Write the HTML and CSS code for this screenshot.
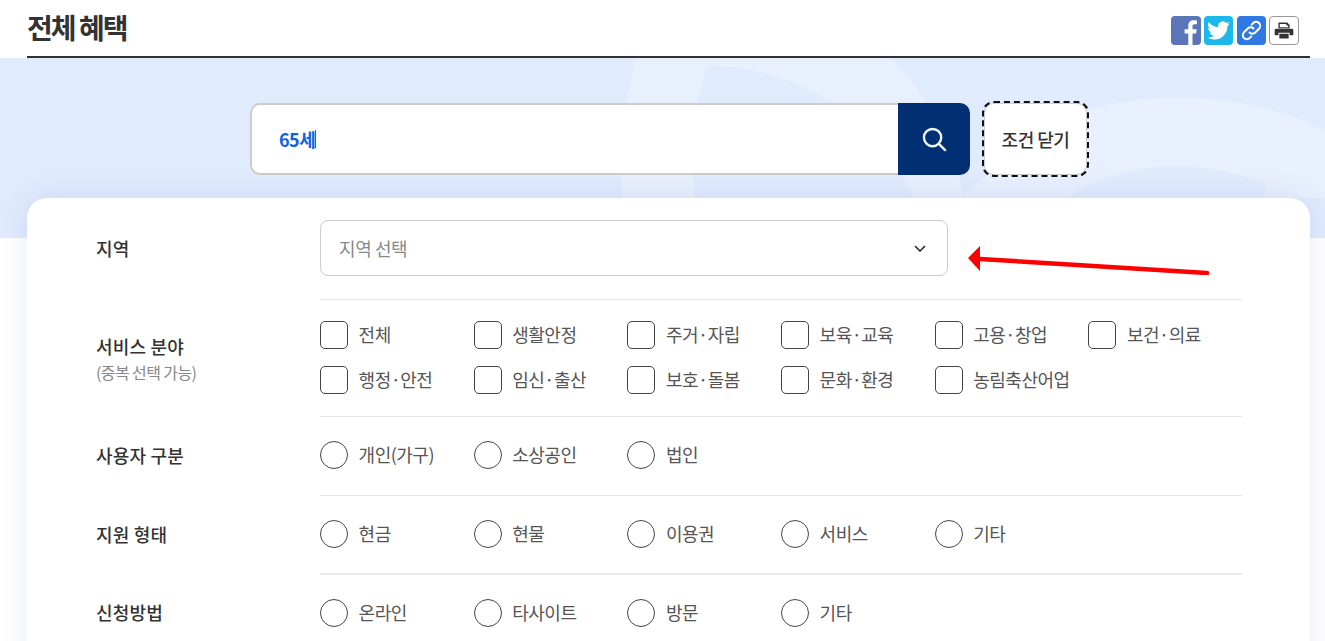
FILE: index.html
```html
<html>

<head>
    <meta charset="UTF-8">
    <meta name="viewport" content="width=device-width, initial-scale=1.0">
    <title>전체 혜택</title>

    <link rel="stylesheet" href="styles.css">
</head>

<body>
    <header class="page-head">
        <h2 class="page-title">전체 혜택</h2>
        <div class="share">
            <a class="share-btn share-fb" href="#" aria-label="페이스북">
                <svg viewBox="0 0 30 29"><path d="M21.5 29V17.6h3.6l.6-4.4h-4.2v-2.8c0-1.3.4-2.1 2.2-2.1h2.2V4.4c-.4-.1-1.700-.2-3.200-.2-3.200 0-5.400 2-5.400 5.600v3.400h-3.700v4.400h3.700V29z" fill="#fff"/></svg>
            </a>
            <a class="share-btn share-tw" href="#" aria-label="트위터">
                <svg viewBox="-3.500 -3.500 31 31"><path d="M23.950 4.570a10 10 0 01-2.830.8 4.900 4.900 0 002.170-2.720 9.900 9.900 0 01-3.130 1.190 4.920 4.920 0 00-8.380 4.480A14 14 0 011.640 3.160a4.930 4.930 0 001.520 6.570 4.900 4.900 0 01-2.230-.62v.06a4.920 4.920 0 003.950 4.830 4.900 4.900 0 01-2.220.08 4.930 4.930 0 004.600 3.420A9.870 9.870 0 010 19.540a13.940 13.940 0 007.550 2.210c9.060 0 14-7.500 14-14v-.64a10 10 0 002.460-2.550z" fill="#fff"/></svg>
            </a>
            <a class="share-btn share-link" href="#" aria-label="링크 복사">
                <svg viewBox="0 0 29 29" fill="none" stroke="#fff" stroke-width="2" stroke-linecap="round">
                    <path d="M12.500 16.500a4 4 0 005.700 0l3.800-3.800a4 4 0 00-5.700-5.700l-1.600 1.600"/>
                    <path d="M16.500 12.500a4 4 0 00-5.700 0L7 16.300a4 4 0 005.700 5.700l1.600-1.600"/>
                </svg>
            </a>
            <a class="share-btn share-print" href="#" aria-label="인쇄">
                <svg viewBox="0 0 30 29"><path d="M9 6h9.500L21 8.500V12H9zm1.500 1.500V11h9V9h-2V7.500zM6.500 12.500h17a1.500 1.500 0 011.500 1.500v5.500h-4V17H9v2.500H5V14a1.500 1.500 0 011.500-1.500zM10 18h10v5H10z" fill="#333"/></svg>
            </a>
        </div>
    </header>

    <section class="hero">
        <svg class="hero-bg" viewBox="0 0 1325 180">
            <path d="M637 0H890C920 25 950 80 965 140H915C890 95 860 60 835 45C800 25 760 8 708 8C692 50 690 90 695 140H622C618 90 625 40 637 0z" fill="#e8f0fe"/>
            <path d="M960 140C985 120 1040 70 1089 52C1140 35 1240 30 1325 72V140H1265V126C1220 105 1130 95 1067 140z" fill="#e8f0fe"/>
        </svg>
        <form class="search" onsubmit="return false">
            <div class="search-box">
                <div class="search-field"><span class="search-value">65세</span><span class="caret"></span></div>
                <button type="button" class="search-btn" aria-label="검색">
                    <svg viewBox="0 0 26 26" fill="none" stroke="#f2f5fa" stroke-width="2.500" stroke-linecap="round">
                        <circle cx="11" cy="11" r="9"/>
                        <path d="M17.500 17.500L24 24"/>
                    </svg>
                </button>
            </div>
            <button type="button" class="toggle-btn">조건 닫기</button>
        </form>
    </section>

    <main class="card">
        <div class="row row-select">
            <div class="row-label">지역</div>
            <div class="select">
                <span>지역 선택</span>
                <svg viewBox="0 0 12 7" fill="none" stroke="#222" stroke-width="1.500"><path d="M1 1l5 5 5-5"/></svg>
            </div>
        </div>

        <div class="row row-multi">
            <div class="row-label">서비스 분야<small>(중복 선택 가능)</small></div>
            <div class="options">
                <label class="opt"><i class="box"></i>전체</label>
                <label class="opt"><i class="box"></i>생활안정</label>
                <label class="opt"><i class="box"></i>주거·자립</label>
                <label class="opt"><i class="box"></i>보육·교육</label>
                <label class="opt"><i class="box"></i>고용·창업</label>
                <label class="opt"><i class="box"></i>보건·의료</label>
                <label class="opt"><i class="box"></i>행정·안전</label>
                <label class="opt"><i class="box"></i>임신·출산</label>
                <label class="opt"><i class="box"></i>보호·돌봄</label>
                <label class="opt"><i class="box"></i>문화·환경</label>
                <label class="opt"><i class="box"></i>농림축산어업</label>
            </div>
        </div>

        <div class="row">
            <div class="row-label">사용자 구분</div>
            <div class="options">
                <label class="opt"><i class="radio"></i>개인(가구)</label>
                <label class="opt"><i class="radio"></i>소상공인</label>
                <label class="opt"><i class="radio"></i>법인</label>
            </div>
        </div>

        <div class="row">
            <div class="row-label">지원 형태</div>
            <div class="options">
                <label class="opt"><i class="radio"></i>현금</label>
                <label class="opt"><i class="radio"></i>현물</label>
                <label class="opt"><i class="radio"></i>이용권</label>
                <label class="opt"><i class="radio"></i>서비스</label>
                <label class="opt"><i class="radio"></i>기타</label>
            </div>
        </div>

        <div class="row row-last">
            <div class="row-label">신청방법</div>
            <div class="options">
                <label class="opt"><i class="radio"></i>온라인</label>
                <label class="opt"><i class="radio"></i>타사이트</label>
                <label class="opt"><i class="radio"></i>방문</label>
                <label class="opt"><i class="radio"></i>기타</label>
            </div>
        </div>
    </main>

    <!-- red annotation arrow drawn over the page -->
    <svg class="arrow" viewBox="0 0 250 30">
        <path d="M12 14L239 28" stroke="#f00" stroke-width="4.500" stroke-linecap="round"/>
        <path d="M0 13L12 1V26z" fill="#f00"/>
    </svg>
</body>

</html>
```

FILE: styles.css
```css
:root {
    --text-color: #333;
    --option-color: #555;
    --line-color: #e6e6e6;
    --navy: #003073;
    --hero-color: #e0ebfe;
}

html,
body {
    height: 641px;
    overflow: hidden;
}

body {
    margin: 0;
    position: relative;
    background: #fff;
    color: var(--text-color);
    font-family: "Noto Sans CJK KR", "Noto Sans", sans-serif;
}

.page-head {
    display: flex;
    justify-content: space-between;
    align-items: flex-start;
    height: 56px;
    margin: 0 15px 0 27px;
    border-bottom: 2px solid #333;
}

.page-title {
    margin: 6px 0 0;
    font-size: 28px;
    line-height: 42px;
    font-weight: 700;
    letter-spacing: -2px;
}

.share {
    display: flex;
    gap: 3px;
    margin: 16px 11px 0 0;
}

.share-btn {
    display: block;
    width: 29px;
    height: 29px;
    box-sizing: border-box;
    border-radius: 4px;
    overflow: hidden;
}

.share-btn svg {
    display: block;
    width: 100%;
    height: 100%;
}

.share-fb {
    width: 30px;
    background: #5a76b8;
}

.share-tw {
    background: #1bb8ec;
}

.share-link {
    margin-left: 1px;
    background: #2e79e4;
}

.share-print {
    width: 30px;
    border: 1px solid #999;
    background: #fff;
}

.hero {
    position: relative;
    height: 180px;
    background: var(--hero-color);
}

.hero-bg {
    position: absolute;
    left: 0;
    top: 0;
    width: 100%;
    height: 100%;
}

.search {
    position: relative;
    display: flex;
    gap: 14px;
    margin-left: 250px;
    padding-top: 45px;
}

.search-box {
    display: flex;
    width: 720px;
    height: 72px;
}

.search-field {
    flex: 1;
    display: flex;
    align-items: center;
    padding-left: 27px;
    background: #fff;
    border: 2px solid #ccc;
    border-right: 0;
    border-radius: 10px 0 0 10px;
}

.search-value {
    color: #0b63e5;
    font-size: 18px;
    font-weight: 700;
    letter-spacing: -0.500px;
}

.caret {
    width: 1px;
    height: 18px;
    background: #0b63e5;
}

.search-btn {
    width: 72px;
    padding: 0;
    border: 0;
    border-radius: 0 10px 10px 0;
    background: var(--navy);
    display: flex;
    align-items: center;
    justify-content: center;
}

.search-btn svg {
    width: 25px;
    height: 25px;
}

.toggle-btn {
    width: 103px;
    height: 72px;
    padding: 0;
    background: #fff;
    border: 1px solid #ccc;
    border-radius: 10px;
    outline: 2px dashed #111;
    outline-offset: 0;
    color: var(--text-color);
    font-family: inherit;
    font-size: 18px;
    font-weight: 500;
    letter-spacing: -0.500px;
}

.card {
    position: relative;
    margin: -40px 15px 0 27px;
    padding: 0 68px 0 69px;
    height: 600px;
    background: #fff;
    border-radius: 20px;
    box-shadow: 0 0 30px rgba(0, 50, 130, 0.1);
}

.row {
    display: flex;
    align-items: center;
    height: 79px;
}

.row-select {
    height: 101px;
    align-items: flex-start;
    padding-top: 22px;
    box-sizing: border-box;
}

.row-multi {
    height: 117px;
}

.row-last {
    margin-top: -1px;
}

.row-label {
    flex: 0 0 224px;
    margin-bottom: 2px;
    font-size: 18px;
    font-weight: 500;
    letter-spacing: 0.200px;
}

.row-multi .row-label {
    margin-top: 2px;
    margin-bottom: 0;
}

.row-select .row-label {
    line-height: 56px;
}

.row-label small {
    display: block;
    margin-top: 1px;
    color: #888;
    font-size: 16px;
    font-weight: 400;
    letter-spacing: -0.600px;
}

.select {
    flex: 0 0 628px;
    box-sizing: border-box;
    height: 56px;
    display: flex;
    align-items: center;
    justify-content: space-between;
    padding: 0 21px 0 18px;
    border: 1px solid #ccc;
    border-radius: 8px;
    color: #888;
    font-size: 18px;
    letter-spacing: -0.400px;
}

.select svg {
    width: 12px;
    height: 7px;
}

.options {
    flex: 1;
    align-self: stretch;
    display: grid;
    grid-template-columns: repeat(6, 1fr);
    row-gap: 17px;
    align-content: center;
    padding-bottom: 2px;
    border-top: 1px solid var(--line-color);
}

.row-last .options {
    border-top: 2px solid #ebebeb;
}

.opt {
    display: flex;
    align-items: center;
    gap: 10.600px;
    height: 28px;
    box-sizing: border-box;
    padding-bottom: 2px;
    color: var(--option-color);
    font-size: 18px;
    letter-spacing: -0.500px;
}

.box,
.radio {
    flex: none;
    box-sizing: border-box;
    width: 28px;
    height: 28px;
    margin-bottom: -2px;
    background: #fff;
    border: 1px solid #444;
}

.box {
    border-radius: 5px;
}

.radio {
    border-radius: 50%;
}

.arrow {
    position: absolute;
    left: 968px;
    top: 245px;
    width: 250px;
    height: 30px;
}
```
